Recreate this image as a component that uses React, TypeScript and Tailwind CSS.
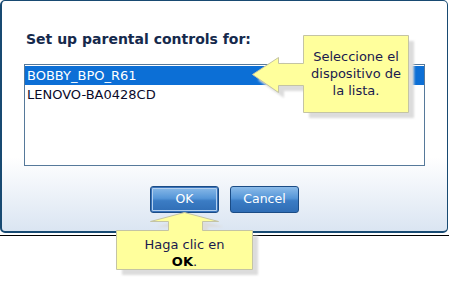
import React from 'react';

const font = { fontFamily: '"DejaVu Sans", Verdana, sans-serif' };

const Callouts: React.FC = () => (
    <svg className="absolute inset-0 pointer-events-none" width={476} height={287} viewBox="0 0 476 287">
        <defs>
            <filter id="soft" x="-20%" y="-20%" width="140%" height="140%">
                <feGaussianBlur stdDeviation="1.2" />
            </filter>
        </defs>
        {/* list callout */}
        <g>
            <path
                transform="translate(6 6)"
                d="M303 35 H408 V112 H303 V85 H278 V92 L252 74 L278 57 V63 H303 Z"
                fill="#dcdcdc"
                filter="url(#soft)"
            />
            <path
                d="M303.5 35.5 H408.5 V112.5 H303.5 V85.5 H278.5 V92.5 L252.5 74.5 L278.5 57.5 V63.5 H303.5 Z"
                fill="#ffff9c"
                stroke="#c4c4a4"
                strokeWidth="1"
            />
        </g>
        {/* ok callout */}
        <g>
            <path
                transform="translate(6 6)"
                d="M184 212 L218 221 H202 V230 H252 V269 H116 V230 H168 V221 H150 Z"
                fill="#dcdcdc"
                filter="url(#soft)"
            />
            <path
                d="M184.5 212.5 L218.5 221.5 H202.5 V230.5 H252.5 V269.5 H116.5 V230.5 H168.5 V221.5 H150.5 Z"
                fill="#ffff9c"
                stroke="#c4c4a4"
                strokeWidth="1"
            />
        </g>
    </svg>
);

const App: React.FC = () => {
    const btn =
        'w-[69px] h-[27px] rounded-[3px] border border-[#1b4c85] bg-[linear-gradient(to_bottom,#8bbbe9,#5596d8_45%,#3b7cc4_55%,#2f6db5)] text-white text-[12.5px] leading-none flex items-center justify-center';

    return (
        <div className="relative w-[476px] h-[287px] bg-white overflow-hidden" style={font}>
            <div className="w-[449px] border-b border-black pb-[2px]">
                {/* dialog */}
                <div className="w-[448px] h-[233px] rounded-[5px] border border-[#184a72] border-l-2 border-b-2 bg-[linear-gradient(to_bottom,#ffffff_68%,#dae5f2)] flex flex-col">
                    <h1 className="mt-[28px] ml-[24px] text-[14px] font-bold text-[#15294c] leading-[20px]">
                        Set up parental controls for:
                    </h1>
                    <div className="mt-[15px] ml-[22px] w-[401px] h-[102px] border border-[#56799a] bg-white flex flex-col pt-px">
                        <div className="h-[19px] leading-[19px] px-[2px] text-[13px] bg-[#0c6fd6] text-white">BOBBY_BPO_R61</div>
                        <div className="h-[19px] leading-[19px] px-[2px] text-[13px] text-[#0a0a2a]">LENOVO-BA0428CD</div>
                    </div>
                    <div className="mt-[20px] flex justify-center gap-[11px]">
                        <div className={`${btn} shadow-[inset_0_0_0_1px_#3a74bb,inset_0_0_0_2px_#b3d0ee]`}>OK</div>
                        <div className={btn}>Cancel</div>
                    </div>
                </div>
            </div>

            <Callouts />

            <div className="absolute left-[303px] top-[48px] w-[106px] text-center text-[13px] leading-[17px] text-[#1a1a4e]">
                Seleccione el
                <br />
                dispositivo de
                <br />
                la lista.
            </div>
            <div className="absolute left-[116px] top-[236px] w-[137px] text-center text-[13px] leading-[17px] text-[#1a1a4e]">
                Haga clic en
                <br />
                <b className="text-black">OK</b>.
            </div>
        </div>
    );
};

export default App;
